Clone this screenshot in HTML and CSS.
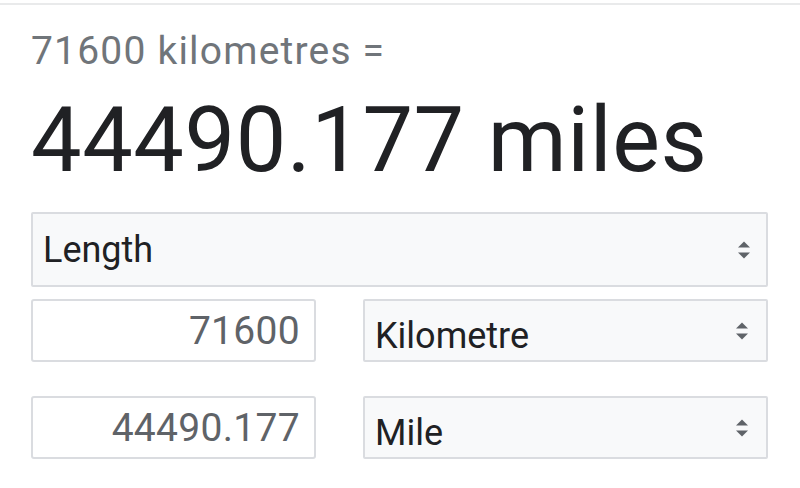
FILE: index.html
```html
<!DOCTYPE html>
<html lang="en">
<head>
<meta charset="utf-8">
<title>Unit converter</title>
<link rel="stylesheet" href="styles.css">
</head>
<body>
<div class="topline"></div>
<main class="converter">
  <div class="equation">71600 kilometres =</div>
  <div class="result">44490.177 miles</div>
  <div class="select select-wide">
    <span class="select-label">Length</span>
    <svg class="arrows" width="12" height="18" viewBox="0 0 12 18"><polygon points="0,6.5 6,0.5 12,6.5"/><polygon points="0,11.5 12,11.5 6,17.5"/></svg>
  </div>
  <div class="grid">
    <div class="field">71600</div>
    <div class="select select-unit">
      <span class="select-label">Kilometre</span>
      <svg class="arrows" width="12" height="18" viewBox="0 0 12 18"><polygon points="0,6.5 6,0.5 12,6.5"/><polygon points="0,11.5 12,11.5 6,17.5"/></svg>
    </div>
    <div class="field">44490.177</div>
    <div class="select select-unit">
      <span class="select-label">Mile</span>
      <svg class="arrows" width="12" height="18" viewBox="0 0 12 18"><polygon points="0,6.5 6,0.5 12,6.5"/><polygon points="0,11.5 12,11.5 6,17.5"/></svg>
    </div>
  </div>
</main>
</body>
</html>
```
FILE: styles.css
```css
html, body {
  margin: 0;
  padding: 0;
  background: #ffffff;
}
body {
  font-family: Roboto, "Liberation Sans", Arial, sans-serif;
  width: 800px;
  height: 488px;
  overflow: hidden;
}
.topline {
  margin-top: 3px;
  height: 2px;
  background: #e9eaeb;
}
.converter {
  padding: 0 32px 0 31px;
}
.equation {
  margin-top: 22px;
  font-size: 39px;
  line-height: 48px;
  letter-spacing: 1.2px;
  color: #70757a;
}
.result {
  margin-top: 16px;
  font-size: 90px;
  line-height: 100px;
  letter-spacing: 0.6px;
  color: #202124;
  white-space: nowrap;
}
.select {
  box-sizing: border-box;
  display: flex;
  align-items: center;
  justify-content: space-between;
  background: #f8f9fa;
  border: 2px solid #dadce0;
  border-radius: 2px;
  color: #202124;
}
.select-wide {
  margin-top: 21px;
  width: 737px;
  height: 75px;
  padding: 0 16px 0 10px;
}
.select-wide .select-label {
  font-size: 36px;
}
.arrows {
  fill: #5f6368;
  flex: none;
}
.grid {
  margin-top: 12px;
  display: grid;
  grid-template-columns: 285px 405px;
  grid-auto-rows: 63px;
  column-gap: 47px;
  row-gap: 34px;
}
.field {
  box-sizing: border-box;
  border: 2px solid #dadce0;
  border-radius: 3px;
  display: flex;
  align-items: center;
  justify-content: flex-end;
  padding: 0 14px 0 10px;
  font-size: 39px;
  color: #5f6368;
  letter-spacing: 0.3px;
}
.select-unit {
  padding: 11px 18px 0 10px;
}
.select-unit .select-label {
  font-size: 36px;
}
.select-unit .arrows {
  margin-top: -11px;
}
```
